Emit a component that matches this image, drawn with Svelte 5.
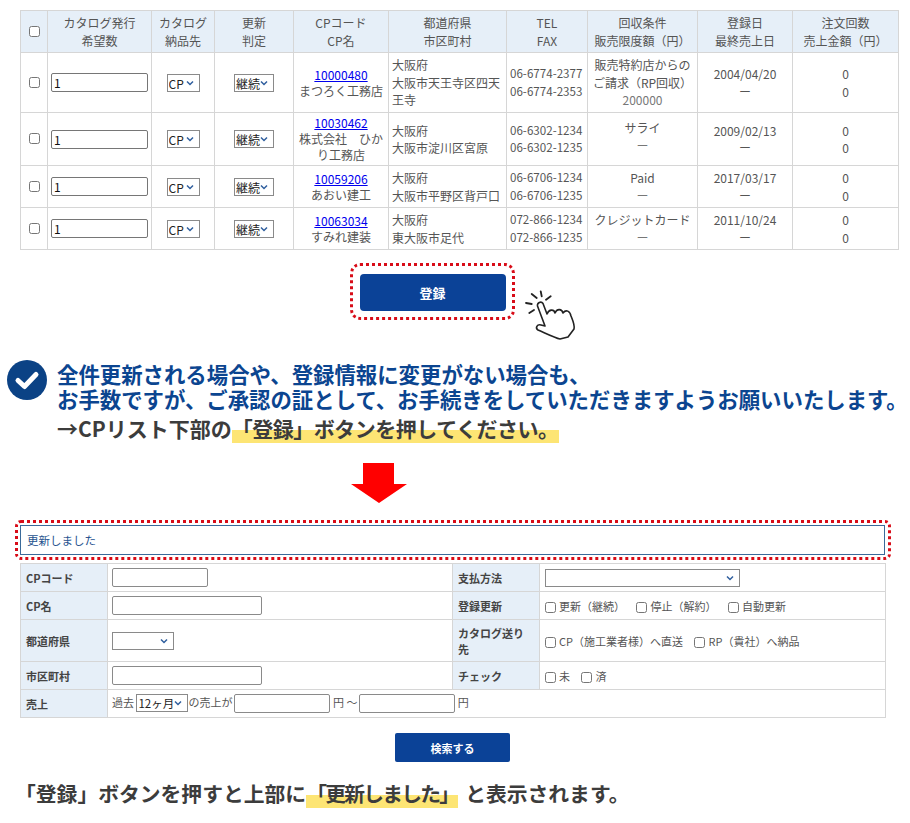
<script>
  const rows = [
    { code: '10000480', name: 'まつろく工務店', pref: '大阪府', city: '大阪市天王寺区四天王寺', tel: '06-6774-2377', fax: '06-6774-2353', cond: '販売特約店からのご請求\uFF08RP回収\uFF09', limit: '200000', date: '2004/04/20', cls: 'r1' },
    { code: '10030462', name: '株式会社\u3000ひかり工務店', pref: '大阪府', city: '大阪市淀川区宮原', tel: '06-6302-1234', fax: '06-6302-1235', cond: 'サライ', limit: 'ー', date: '2009/02/13', cls: 'r2' },
    { code: '10059206', name: 'あおい建工', pref: '大阪府', city: '大阪市平野区背戸口', tel: '06-6706-1234', fax: '06-6706-1235', cond: 'Paid', limit: 'ー', date: '2017/03/17', cls: 'r3' },
    { code: '10063034', name: 'すみれ建装', pref: '大阪府', city: '東大阪市足代', tel: '072-866-1234', fax: '072-866-1235', cond: 'クレジットカード', limit: 'ー', date: '2011/10/24', cls: 'r3' }
  ];
  const heads = [
    ['カタログ発行', '希望数'], ['カタログ', '納品先'], ['更新', '判定'], ['CPコード', 'CP名'],
    ['都道府県', '市区町村'], ['TEL', 'FAX'], ['回収条件', '販売限度額\uFF08円\uFF09'], ['登録日', '最終売上日'], ['注文回数', '売上金額\uFF08円\uFF09']
  ];
</script>

<div class="page">
  <table class="list">
    <colgroup>
      <col class="c1" /><col class="c2" /><col class="c3" /><col class="c4" /><col class="c5" />
      <col class="c6" /><col class="c7" /><col class="c8" /><col class="c9" /><col class="c10" />
    </colgroup>
    <thead>
      <tr>
        <th><input type="checkbox" /></th>
        {#each heads as h}
          <th>{h[0]}<br />{h[1]}</th>
        {/each}
      </tr>
    </thead>
    <tbody>
      {#each rows as r}
        <tr class={r.cls}>
          <td class="center"><input type="checkbox" /></td>
          <td class="center"><input class="qty" type="text" value="1" /></td>
          <td class="center"><select class="sel cp"><option>CP</option></select></td>
          <td class="center"><select class="sel kz"><option>継続</option></select></td>
          <td class="center code"><a href="#top">{r.code}</a><br />{r.name}</td>
          <td class="addr">{r.pref}<br />{r.city}</td>
          <td class="tel">{r.tel}<br />{r.fax}</td>
          <td class="center cond">{r.cond}<br /><span class="limit">{r.limit}</span></td>
          <td class="center">{r.date}<br />ー</td>
          <td class="center">0<br />0</td>
        </tr>
      {/each}
    </tbody>
  </table>

  <div class="register">
    <div class="dotted-btn"><button class="btn-main">登録</button></div>
    <svg class="hand" viewBox="0 0 54 52" width="54" height="52" fill="none" stroke="#222" stroke-linecap="round" stroke-linejoin="round">
      <path stroke-width="1.6" d="M12.5 17C12 14 16 11.500 18 14.500L22 25C24 20 29 20 30 24C32 19 37 20 38 24C41 20 45 22 46 27C48 32 50 36 49 40L43 48L35 50C30 49 20 44 13 41C10 39 12 35 16 36L20 37Z" />
      <path stroke-width="1.8" d="M6.700 5L11.700 9M15.700 2.300L16.700 7.300M25.700 7.300L21 10.700M1 14L6.700 15M4.300 24L9 21" />
    </svg>
  </div>

  <div class="notice">
    <svg class="check" viewBox="0 0 40 40" width="40" height="40">
      <circle cx="20" cy="20" r="20" fill="#0b4285" />
      <path d="M11 20.500L17.500 26.500L29 14.500" fill="none" stroke="#fff" stroke-width="5" stroke-linecap="round" stroke-linejoin="round" />
    </svg>
    <div class="notice-text">
      <p class="blue">全件更新される場合や、登録情報に変更がない場合も、</p>
      <p class="blue">お手数ですが、ご承認の証として、お手続きをしていただきますようお願いいたします。</p>
      <p class="dark">→CPリスト下部の<span class="mark tight3">「登録」ボタンを押してください。</span></p>
    </div>
  </div>

  <svg class="arrow" viewBox="0 0 56 40" width="56" height="40">
    <path d="M12 0H43V21H56L28 40L0 21H12Z" fill="#f00" />
  </svg>

  <div class="dotted-msg"><div class="msg">更新しました</div></div>

  <table class="form">
    <colgroup><col class="f1" /><col class="f2" /><col class="f3" /><col class="f4" /></colgroup>
    <tbody>
      <tr class="h28">
        <th>CPコード</th><td class="left"><input class="w96" type="text" /></td>
        <th>支払方法</th><td><select class="w195"><option></option></select></td>
      </tr>
      <tr class="h28">
        <th>CP名</th><td class="left"><input class="w150" type="text" /></td>
        <th>登録更新</th>
        <td class="checks">
          <label><input type="checkbox" />更新&#xFF08;継続&#xFF09;</label>
          <label><input type="checkbox" />停止&#xFF08;解約&#xFF09;</label>
          <label><input type="checkbox" />自動更新</label>
        </td>
      </tr>
      <tr class="h42">
        <th>都道府県</th><td class="left"><select class="w62"><option></option></select></td>
        <th>カタログ送り先</th>
        <td class="checks">
          <label><input type="checkbox" />CP&#xFF08;施工業者様&#xFF09;へ直送</label>
          <label><input type="checkbox" />RP&#xFF08;貴社&#xFF09;へ納品</label>
        </td>
      </tr>
      <tr class="h28">
        <th>市区町村</th><td class="left"><input class="w150" type="text" /></td>
        <th>チェック</th>
        <td class="checks">
          <label><input type="checkbox" />未</label>
          <label><input type="checkbox" />済</label>
        </td>
      </tr>
      <tr class="h28">
        <th>売上</th>
        <td colspan="3" class="sales left">
          過去 <select class="month"><option>12ヶ月</option></select>の売上が<input class="w96 gap" type="text" /> 円 &#x301C;<input class="w96 gap" type="text" /> 円
        </td>
      </tr>
    </tbody>
  </table>

  <div class="search"><button class="btn-search">検索する</button></div>

  <p class="foot">「登録」ボタンを押すと上部に<span class="mark tight2">「更新しました」</span>と表示されます。</p>
</div>

<style>
  :global(body) {
    margin: 0;
    background: #fff;
  }
  .page {
    width: 910px;
    height: 823px;
    overflow: hidden;
    box-sizing: border-box;
    padding-top: 10px;
    font-family: "Noto Sans CJK JP", "Noto Sans", sans-serif;
    color: #555;
    font-size: 12px;
  }
  table {
    border-collapse: collapse;
    table-layout: fixed;
  }
  .list {
    width: 879px;
    margin-left: 20px;
    line-height: 17.5px;
  }
  .c1 { width: 27px; }
  .c2 { width: 104px; }
  .c3 { width: 63px; }
  .c4 { width: 79px; }
  .c5 { width: 95px; }
  .c6 { width: 118px; }
  .c7 { width: 81px; }
  .c8 { width: 110px; }
  .c9 { width: 95px; }
  .c10 { width: 106px; }
  .list th,
  .list td {
    border: 1px solid #d6d6d6;
    padding: 0 3px;
    overflow: hidden;
  }
  .list th {
    background: #e6eff8;
    font-weight: 400;
    height: 41px;
    text-align: center;
    white-space: nowrap;
  }
  .list input[type="checkbox"],
  .form input[type="checkbox"] {
    width: 11px;
    height: 11px;
    margin: 0;
  }
  .list input[type="checkbox"] {
    vertical-align: top;
    margin-top: 3px;
  }
  .form input[type="checkbox"] {
    vertical-align: middle;
  }
  .r1 td { height: 59px; }
  .r2 td { height: 52px; }
  .r3 td { height: 41px; }
  .center { text-align: center; }
  .code { line-height: 16px; }
  .tel { white-space: nowrap; font-size: 11.6px; padding-left: 4px; }
  .list .r2 .cond { vertical-align: top; padding-top: 6px; height: 46px; }
  a { color: #0000ee; }
  .limit { color: #777; }
  .qty {
    box-sizing: border-box;
    width: 97px;
    height: 19px;
    padding: 0 2px;
    border: 1px solid #767676;
    border-radius: 2px;
    font: 12px "Noto Sans CJK JP", sans-serif;
    color: #111;
    vertical-align: top;
  }
  select {
    appearance: none;
    font: 12px "Noto Sans CJK JP", sans-serif;
    height: 18px;
    box-sizing: border-box;
    padding: 0 0 0 1px;
    vertical-align: top;
    color: #222;
    background: #fff url("data:image/svg+xml,%3Csvg xmlns='http://www.w3.org/2000/svg' width='8' height='6'%3E%3Cpath d='M1 1.500L4 4.500L7 1.500' fill='none' stroke='%232f5f9e' stroke-width='1.500'/%3E%3C/svg%3E") no-repeat right 5px center;
    border: 1px solid #8a8a8a;
    border-radius: 0;
  }
  .cp { width: 33px; }
  .kz { width: 40px; }
  .register {
    display: flex;
    align-items: flex-start;
    margin-top: 13px;
    margin-left: 350px;
    gap: 10px;
  }
  .dotted-btn {
    box-sizing: border-box;
    width: 165px;
    height: 57px;
    padding-top: 1px;
    border: 3px dotted #d80c18;
    border-radius: 10px;
    display: flex;
    align-items: center;
    justify-content: center;
  }
  .btn-main {
    width: 146px;
    height: 37px;
    background: #0b4297;
    color: #fff;
    border: none;
    border-radius: 4px;
    font: 700 13px "Noto Sans CJK JP", sans-serif;
  }
  .hand {
    margin-top: 26px;
    flex: none;
  }
  .notice {
    display: flex;
    margin-top: 21px;
    margin-left: 7px;
    height: 92px;
  }
  .check { flex: none; margin-top: -2px; }
  .notice-text { margin-left: 10px; white-space: nowrap; }
  .notice p { margin: 0; font-weight: 700; font-size: 21px; }
  .notice p.blue { color: #0b4590; line-height: 24.5px; font-size: 21.4px; }
  .dark { color: #3c3c3c; line-height: 31px; margin-top: 2px !important; }
  .mark {
    background: linear-gradient(transparent 57%, #fde574 57%);
  }
  .tight3 { letter-spacing: -0.5px; }
  .tight2 { letter-spacing: -1.8px; margin-right: 7px; }
  .arrow {
    display: block;
    margin-left: 351px;
    margin-top: 9px;
  }
  .dotted-msg {
    box-sizing: border-box;
    width: 876px;
    height: 40px;
    margin: 17px 0 0 15px;
    padding: 2px 3px 2px 2px;
    border: 3px dotted #d80c18;
    border-radius: 6px;
  }
  .msg {
    box-sizing: border-box;
    height: 30px;
    border: 1px solid #3a6a9a;
    line-height: 28px;
    padding-left: 6px;
    font-size: 11.5px;
    color: #27538f;
  }
  .form {
    width: 865px;
    margin: 3px 0 0 20px;
    font-size: 11px;
    line-height: 16px;
  }
  .f1 { width: 87px; }
  .f2 { width: 345px; }
  .f3 { width: 87px; }
  .f4 { width: 346px; }
  .form th,
  .form td {
    border: 1px solid #d6d6d6;
    padding: 0 5px;
    text-align: left;
  }
  .form td.left { padding-left: 4px; }
  .form th {
    background: #e6eff8;
    color: #444;
    font-weight: 700;
  }
  .h28 th, .h28 td { height: 27px; }
  .h42 th, .h42 td { height: 41px; }
  .form input[type="text"] {
    box-sizing: border-box;
    height: 19px;
    border: 1px solid #8a8a8a;
    border-radius: 2px;
    vertical-align: top;
    padding: 0 2px;
  }
  .form input.gap { margin-left: 2px; }
  .w96 { width: 96px; }
  .w150 { width: 150px; }
  .w195 { width: 195px; }
  .w62 { width: 62px; height: 18px; }
  .month { font-size: 11.500px; width: 52px; }
  .checks label { margin-right: 9px; white-space: nowrap; }
  .checks input { margin-right: 3px !important; }
  .sales { white-space: nowrap; }
  .search {
    display: flex;
    justify-content: flex-start;
    margin: 15px 0 0 395px;
  }
  .btn-search {
    width: 115px;
    height: 29px;
    background: #0b4297;
    color: #fff;
    border: none;
    border-radius: 2px;
    font: 700 11px "Noto Sans CJK JP", sans-serif;
  }
  .foot {
    margin: 16px 0 0 15px;
    font-size: 20.800px;
    font-weight: 700;
    color: #3c3c3c;
    line-height: 30px;
    white-space: nowrap;
  }
</style>
